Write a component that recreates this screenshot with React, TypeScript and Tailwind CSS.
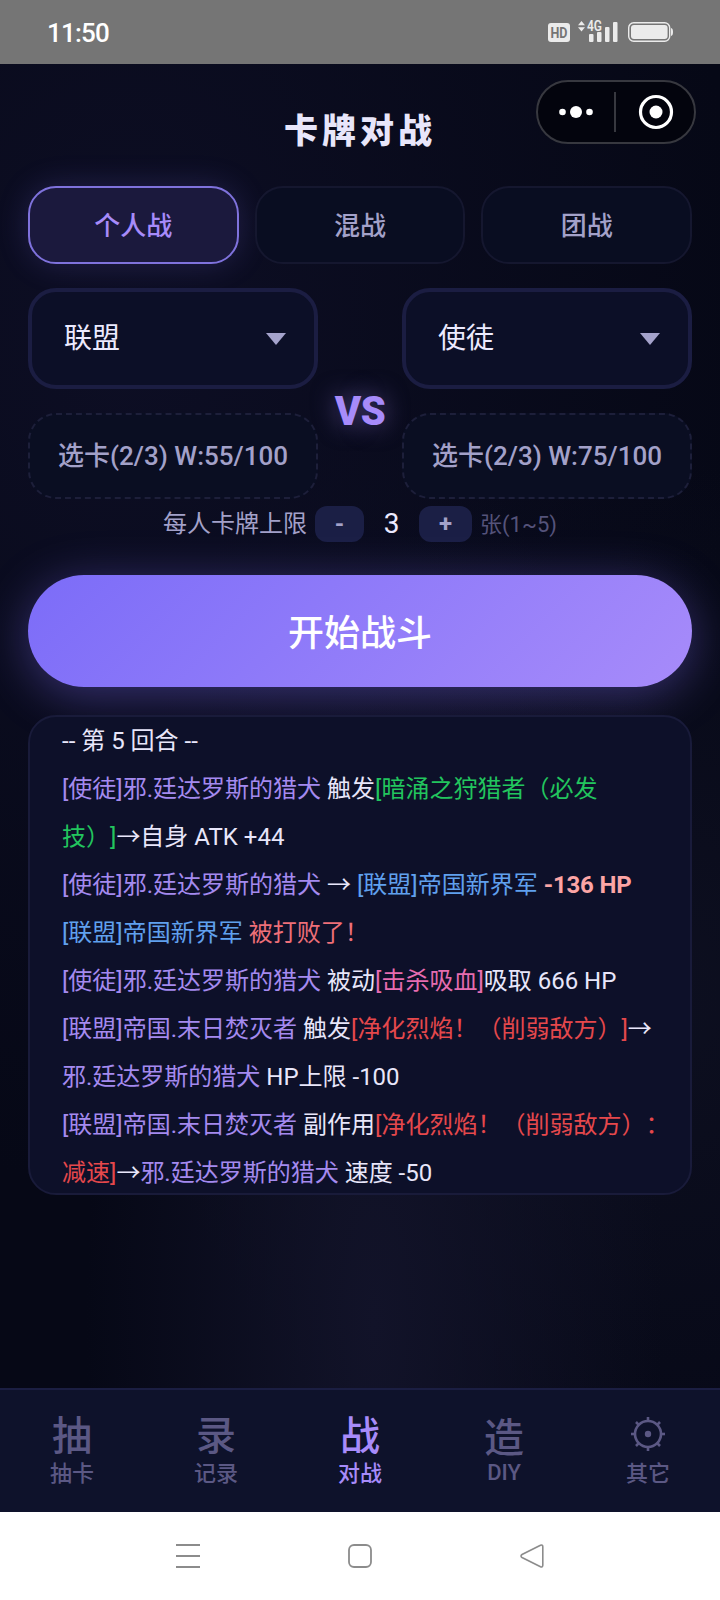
import { Fragment } from 'react';
import clsx from 'clsx';

type Part = { text: string; tone?: keyof typeof tones };

const tones = {
  unit: 'text-[#a48aef]',
  target: 'text-[#60a0ee]',
  buff: 'text-[#22c55e]',
  debuff: 'text-[#e5484c]',
  passive: 'text-[#e66cb0]',
  defeat: 'text-[#ee6f78]',
  damage: 'text-[#fca5a5] font-bold tracking-[-0.2px]',
};

const HOUND = '邪.廷达罗斯的猎犬';

const log: Part[][] = [
  [{ text: '-- 第 5 回合 --' }],
  [{ text: `[使徒]${HOUND}`, tone: 'unit' }, { text: ' 触发' }, { text: '[暗涌之狩猎者（必发', tone: 'buff' }],
  [{ text: '技）]', tone: 'buff' }, { text: '→自身 ATK +44' }],
  [
    { text: `[使徒]${HOUND}`, tone: 'unit' },
    { text: ' → ' },
    { text: '[联盟]帝国新界军', tone: 'target' },
    { text: ' ' },
    { text: '-136 HP', tone: 'damage' },
  ],
  [{ text: '[联盟]帝国新界军', tone: 'target' }, { text: ' ' }, { text: '被打败了！', tone: 'defeat' }],
  [
    { text: `[使徒]${HOUND}`, tone: 'unit' },
    { text: ' 被动' },
    { text: '[击杀吸血]', tone: 'passive' },
    { text: '吸取 666 HP' },
  ],
  [
    { text: '[联盟]帝国.末日焚灭者', tone: 'unit' },
    { text: ' 触发' },
    { text: '[净化烈焰！（削弱敌方）]', tone: 'debuff' },
    { text: '→' },
  ],
  [{ text: HOUND, tone: 'unit' }, { text: ' HP上限 -100' }],
  [
    { text: '[联盟]帝国.末日焚灭者', tone: 'unit' },
    { text: ' 副作用' },
    { text: '[净化烈焰！（削弱敌方）：', tone: 'debuff' },
  ],
  [{ text: '减速]', tone: 'debuff' }, { text: '→' }, { text: HOUND, tone: 'unit' }, { text: ' 速度 -50' }],
];

const modes = ['个人战', '混战', '团战'];

const tabs = [
  { icon: '抽', label: '抽卡' },
  { icon: '录', label: '记录' },
  { icon: '战', label: '对战' },
  { icon: '造', label: 'DIY' },
  { icon: null, label: '其它' },
];

function StatusBar() {
  return (
    <div className="flex h-16 items-center justify-between bg-[#757575] pr-[46px] pl-[47px]">
      <span className="pt-0.5 text-[26px] leading-none font-medium tracking-[-0.8px] text-white">11:50</span>
      <svg width="126" height="32" viewBox="548 16 126 32" fill="#ebebeb">
        <rect x="548" y="23" width="22" height="19" rx="3" />
        <text x="559" y="38" textAnchor="middle" fontSize="15" fontWeight="700" fill="#757575" textLength="17" lengthAdjust="spacingAndGlyphs">HD</text>
        <path d="M578 25.2l3.5-4.2 3.5 4.2zM578 27.2l3.5 4.2 3.5-4.2z" />
        <text x="587" y="31.3" fontSize="14" fontWeight="600" textLength="15" lengthAdjust="spacingAndGlyphs">4G</text>
        <rect x="589" y="34" width="4.5" height="8" rx="1" />
        <rect x="597" y="32" width="4.5" height="10" rx="1" />
        <rect x="605" y="27" width="4.5" height="15" rx="1" />
        <rect x="613" y="22" width="4.5" height="20" rx="1" />
        <rect x="628.7" y="22.7" width="41" height="18.6" rx="5" fill="none" stroke="#ebebeb" strokeWidth="1.4" />
        <rect x="631" y="25" width="36.6" height="14" rx="3" />
        <path d="M671 28c1.500 .8 2 1.500 2 4s-.5 3.200-2 4z" />
      </svg>
    </div>
  );
}

function Capsule() {
  return (
    <div className="absolute top-4 right-6 flex h-16 w-40 items-center rounded-full border-2 border-[#37383f] bg-[#03040d]">
      <svg width="156" height="60" viewBox="0 0 156 60" fill="white">
        <circle cx="24.500" cy="30" r="3.300" />
        <circle cx="38" cy="30" r="6" />
        <circle cx="51.500" cy="30" r="3.300" />
        <path d="M77 10v40" stroke="#37383f" strokeWidth="2" />
        <circle cx="118" cy="30" r="15.500" fill="none" stroke="white" strokeWidth="3.200" />
        <circle cx="118" cy="30" r="6.500" />
      </svg>
    </div>
  );
}

function Side({ camp, cards }: { camp: string; cards: string }) {
  return (
    <div className="flex w-[290px] flex-col gap-6">
      <button className="flex h-[101px] items-center justify-between rounded-[28px] border-4 border-[#1b1d42] bg-[#0c0f27] pr-7 pl-8 text-[28px] text-[#eceaff]">
        {camp}
        <svg width="20" height="12" viewBox="0 0 20 12" fill="#a5a3cc">
          <path d="M0 0h20L10 12z" />
        </svg>
      </button>
      <button className="flex h-[86px] items-center justify-center rounded-[28px] border-2 border-dashed border-[#1d1f3a] bg-[#0a0e22] text-[26px] font-medium text-[#a3a1c9]">
        {cards}
      </button>
    </div>
  );
}

function Gear() {
  return (
    <svg width="36" height="36" viewBox="0 0 36 36" className="-mt-1" fill="none" stroke="currentColor" strokeWidth="2.600">
      <circle cx="18" cy="18" r="13" />
      <circle cx="18" cy="18" r="3.200" fill="currentColor" stroke="none" />
      {[0, 45, 90, 135, 180, 225, 270, 315].map((deg) => (
        <path key={deg} d="M18 1v4" transform={`rotate(${deg} 18 18)`} />
      ))}
    </svg>
  );
}

export default function App() {
  return (
    <div className="flex h-[1600px] w-[720px] flex-col overflow-hidden bg-[#060816] font-['Roboto','Noto_Sans_CJK_SC',sans-serif] [text-spacing-trim:space-all]">
      <StatusBar />

      <main className="relative flex flex-1 flex-col bg-[radial-gradient(ellipse_85%_65%_at_18%_20%,#0d0e24_0%,transparent_100%),radial-gradient(ellipse_40%_70%_at_52%_95%,#121329_0%,transparent_100%),radial-gradient(ellipse_70%_40%_at_90%_70%,#0d0f20_0%,transparent_100%)] px-7">
        <Capsule />
        <h1 className="mt-[43px] mb-[31px] text-center text-[34px] leading-[48px] font-black tracking-[4px] text-[#e8e6fa]">卡牌对战</h1>

        <div className="grid grid-cols-3 gap-4">
          {modes.map((mode, i) => (
            <button
              key={mode}
              className={clsx(
                'h-[78px] rounded-[28px] border-2 pt-0.5 text-[26px] font-medium',
                i === 0
                  ? 'border-[#7f72dc] bg-[#1b193d] text-[#a78bfa] shadow-[0_0_32px_rgba(124,108,240,0.2)]'
                  : 'border-[#15172f] bg-[#090d21] text-[#a3a1c9]'
              )}
            >
              {mode}
            </button>
          ))}
        </div>

        <div className="mt-6 flex items-center justify-between">
          <Side camp="联盟" cards="选卡(2/3) W:55/100" />
          <span className="mt-9 text-[40px] leading-none font-black tracking-[-0.5px] text-[#a78bfa] [text-shadow:0_0_24px_rgba(167,139,250,0.5)]">VS</span>
          <Side camp="使徒" cards="选卡(2/3) W:75/100" />
        </div>

        <div className="mt-[7px] flex h-9 items-center justify-center text-[#a3a1c9]">
          <span className="text-2xl">每人卡牌上限</span>
          <button className="ml-2 h-9 w-[49px] rounded-xl bg-[#1b1f45] text-2xl leading-none font-bold">-</button>
          <span className="w-[55px] text-center text-[28px] leading-none text-[#eceaff]">3</span>
          <button className="mr-2 h-9 w-[53px] rounded-xl bg-[#1b1f45] text-2xl leading-none font-bold">+</button>
          <span className="text-[22px] text-[#55537a]">张(1~5)</span>
        </div>

        <button className="mt-[33px] h-28 shrink-0 rounded-full bg-linear-135 from-[#7c6cf8] to-[#a78bfa] pt-1.5 text-4xl font-medium text-white shadow-[0_8px_48px_rgba(124,108,240,0.4)]">
          开始战斗
        </button>

        <div className="mt-7 h-[480px] shrink-0 overflow-hidden rounded-[28px] border-2 border-[#191b3a] bg-[#0d1029] px-8 text-2xl leading-[48px] text-[#e8e6fa]">
          {log.map((line, i) => (
            <p key={i} className="whitespace-pre">
              {line.map((part, j) => (
                <Fragment key={j}>
                  {part.tone ? <span className={tones[part.tone]}>{part.text}</span> : part.text}
                </Fragment>
              ))}
            </p>
          ))}
        </div>
      </main>

      <nav className="grid h-[124px] grid-cols-5 border-t-2 border-[#1b1e42] bg-[#0e122b] pt-[26px]">
        {tabs.map((tab, i) => (
          <div
            key={tab.label}
            className={clsx('flex flex-col items-center font-medium', i === 2 ? 'text-[#a78bfa]' : 'text-[#5b5884]')}
          >
            <span className={clsx('flex h-10 items-center text-[40px] leading-10', tab.label === 'DIY' ? 'pt-1.5' : tab.icon && 'pt-0.5')}>
              {tab.icon ?? <Gear />}
            </span>
            <span className={clsx('text-[22px]', tab.label === 'DIY' ? 'leading-[33px]' : 'leading-9')}>{tab.label}</span>
          </div>
        ))}
      </nav>

      <div className="flex h-[88px] items-center justify-between bg-white px-44">
        <svg width="24" height="24" viewBox="0 0 24 24" stroke="#8c8c8c" strokeWidth="2">
          <path d="M0 1h24M0 12h24M0 23h24" />
        </svg>
        <svg width="24" height="24" viewBox="0 0 24 24" fill="none" stroke="#8c8c8c" strokeWidth="1.800">
          <rect x="1" y="1" width="22" height="22" rx="5" />
        </svg>
        <svg width="24" height="24" viewBox="0 0 24 24" fill="none" stroke="#8c8c8c" strokeWidth="1.600">
          <path d="M20.500 1.200L2 10.500c-1.300.8-1.300 2.200 0 3L20.500 22.800c1.300.5 2.300 0 2.300-1.500V2.700c0-1.500-1-2-2.300-1.500z" />
        </svg>
      </div>
    </div>
  );
}
